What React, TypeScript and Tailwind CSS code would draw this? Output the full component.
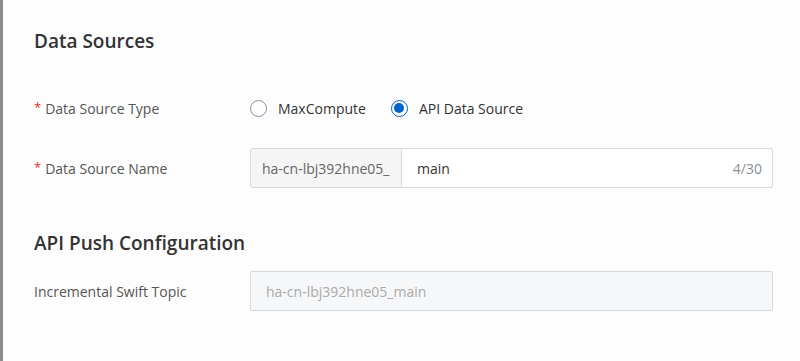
import React from "react";

const font = { fontFamily: '"Open Sans", "Noto Sans", "Liberation Sans", sans-serif' };

function Label({ required, children }: { required?: boolean; children: React.ReactNode }) {
  return (
    <div className="w-[216px] shrink-0 flex items-center text-[14px] text-[#555555]">
      {required && <span className="text-[#d93026] mr-[4px] text-[13px]">*</span>}
      <span>{children}</span>
    </div>
  );
}

function Radio({ checked, label }: { checked?: boolean; label: string }) {
  return (
    <label className="flex items-center">
      <span
        className={
          checked
            ? "w-[17px] h-[17px] rounded-full border border-[#0064c8] flex items-center justify-center"
            : "w-[17px] h-[17px] rounded-full border border-[#7f8ea3]"
        }
      >
        {checked && <span className="w-[10px] h-[10px] rounded-full bg-[#0064c8]" />}
      </span>
      <span className="ml-[11px] text-[14px] text-[#333333]">{label}</span>
    </label>
  );
}

export default function App() {
  return (
    <div className="flex w-[800px] h-[361px] bg-[#fdfdfd]" style={font}>
      <div className="w-[3px] bg-[#8c8c8c] shrink-0" />
      <div className="flex-1 pl-[31px] pr-[27px] pt-[29px]">
        <div className="h-[24px] leading-[24px] text-[19px] font-semibold text-[#333333]">Data Sources</div>

        <div className="mt-[35px] h-[40px] flex items-center">
          <Label required>Data Source Type</Label>
          <div className="flex items-center gap-[25px]">
            <Radio label="MaxCompute" />
            <Radio checked label="API Data Source" />
          </div>
        </div>

        <div className="mt-[20px] h-[40px] flex items-center">
          <Label required>Data Source Name</Label>
          <div className="flex-1 h-[40px] flex border border-[#d5d8dc] rounded-[2px] bg-white">
            <div className="w-[151px] shrink-0 bg-[#f5f5f5] border-r border-[#d5d8dc] flex items-center px-[11px] text-[14px] text-[#666666]">
              ha-cn-lbj392hne05_
            </div>
            <div className="flex-1 flex items-center justify-between pl-[15px] pr-[10px]">
              <span className="text-[14px] text-[#333333]">main</span>
              <span className="text-[14px] text-[#8a8f99]">4/30</span>
            </div>
          </div>
        </div>

        <div className="mt-[43px] h-[24px] leading-[24px] text-[19px] font-semibold text-[#333333]">
          API Push Configuration
        </div>

        <div className="mt-[16px] h-[40px] flex items-center">
          <Label>Incremental Swift Topic</Label>
          <div className="flex-1 h-[40px] flex items-center border border-[#d5d8dc] rounded-[2px] bg-[#f6f7f9] px-[15px] text-[14px] text-[#aaaaaa]">
            ha-cn-lbj392hne05_main
          </div>
        </div>
      </div>
    </div>
  );
}
